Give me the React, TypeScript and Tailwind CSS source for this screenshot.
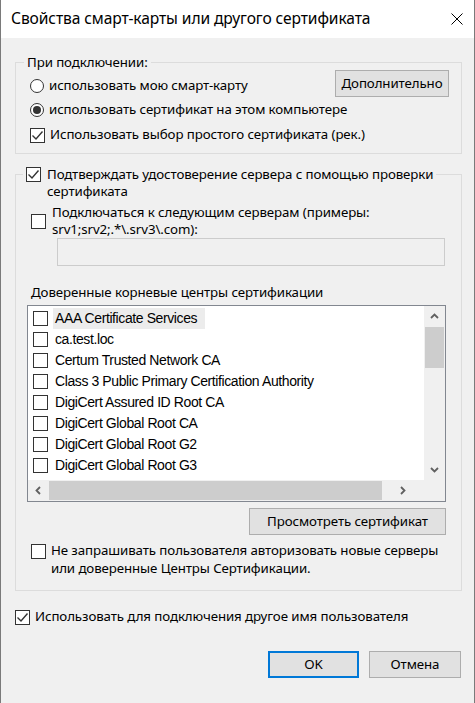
import React from 'react'

const certs = [
  'AAA Certificate Services',
  'ca.test.loc',
  'Certum Trusted Network CA',
  'Class 3 Public Primary Certification Authority',
  'DigiCert Assured ID Root CA',
  'DigiCert Global Root CA',
  'DigiCert Global Root G2',
  'DigiCert Global Root G3',
]

function CheckBox({ checked = false }: { checked?: boolean }) {
  return (
    <span className="w-[15px] h-[15px] shrink-0 border border-[#333333] bg-white flex items-center justify-center">
      {checked && (
        <svg width="13" height="13" viewBox="0 0 13 13">
          <path d="M1.5 6.5 L5 10 L11.5 2.5" fill="none" stroke="#333333" strokeWidth="1.4" />
        </svg>
      )}
    </span>
  )
}

function Radio({ checked = false }: { checked?: boolean }) {
  return (
    <span className="w-[14px] h-[14px] shrink-0 rounded-full border border-[#333333] bg-white flex items-center justify-center">
      {checked && <span className="w-[8px] h-[8px] rounded-full bg-[#333333]" />}
    </span>
  )
}

function Chevron({ dir }: { dir: 'up' | 'down' | 'left' | 'right' }) {
  const d = {
    up: 'M2 7 L5.5 3.5 L9 7',
    down: 'M2 4 L5.5 7.5 L9 4',
    left: 'M7 2 L3.5 5.5 L7 9',
    right: 'M4 2 L7.5 5.5 L4 9',
  }[dir]
  return (
    <svg width="11" height="11" viewBox="0 0 11 11">
      <path d={d} fill="none" stroke="#606060" strokeWidth="1.8" />
    </svg>
  )
}

export default function App() {
  return (
    <div
      className="w-[475px] h-[703px] bg-[#f0f0f0] border-x border-[#7a7a7a] flex flex-col text-[13.3px] tracking-[-0.1px] text-black overflow-hidden whitespace-nowrap"
      style={{ fontFamily: '"Noto Sans", "Open Sans", sans-serif' }}
    >
      {/* title bar */}
      <div className="h-[38px] bg-white flex items-center justify-between pl-[10px] pr-[11px] shrink-0">
        <span className="text-[15.6px] tracking-[-0.1px]">Свойства смарт-карты или другого сертификата</span>
        <svg width="12" height="12" viewBox="0 0 12 12">
          <path d="M0.5 0.5 L11.5 11.5 M11.5 0.5 L0.5 11.5" stroke="#000" strokeWidth="1" />
        </svg>
      </div>

      {/* group 1 */}
      <div className="ml-[14px] mt-[24px] w-[447px] h-[92px] shrink-0 border border-[#dcdcdc] pl-[14px] pr-[12px] flex flex-col">
        <div className="-mt-[11px] -ml-[6px] px-[3px] w-fit bg-[#f0f0f0] leading-[20px]">При подключении:</div>
        <div className="-mt-[2px] flex justify-between items-start">
          <label className="mt-[6px] h-[20px] flex items-center gap-[5px]">
            <Radio />
            <span>использовать мою смарт-карту</span>
          </label>
          <button className="w-[114px] h-[27px] bg-[#e1e1e1] border border-[#adadad]">Дополнительно</button>
        </div>
        <label className="mt-[3px] h-[20px] flex items-center gap-[5px]">
          <Radio checked />
          <span>использовать сертификат на этом компьютере</span>
        </label>
        <label className="mt-[5px] h-[20px] flex items-center gap-[5px]">
          <CheckBox checked />
          <span>Использовать выбор простого сертификата (рек.)</span>
        </label>
      </div>

      {/* group 2 */}
      <div className="ml-[14px] mt-[20px] w-[447px] h-[417px] shrink-0 border border-[#dcdcdc] flex flex-col">
        <div className="-mt-[9px] ml-[7px] px-[3px] w-fit bg-[#f0f0f0] flex items-start gap-[6px] leading-[17px]">
          <span className="mt-[1px]"><CheckBox checked /></span>
          <span>
            Подтверждать удостоверение сервера с помощью проверки
            <br />
            сертификата
          </span>
        </div>

        <label className="ml-[15px] mt-[4px] flex items-center gap-[6px] leading-[17px]">
          <CheckBox />
          <span>
            Подключаться к следующим серверам (примеры:
            <br />
            srv1;srv2;.*\.srv3\.com):
          </span>
        </label>

        <div className="ml-[41px] w-[388px] h-[28px] shrink-0 border border-[#cccccc] bg-[#f0f0f0]" />

        <div className="ml-[15px] mt-[18px] leading-[17px]">Доверенные корневые центры сертификации</div>

        <div className="ml-[11px] mt-[4px] w-[419px] h-[197px] shrink-0 border border-[#828790] bg-white flex flex-col">
          <div className="flex h-[174px]">
            <div
              className="flex-1 pt-[2px] text-[14px]"
              style={{ fontFamily: '"Liberation Sans", Arial, sans-serif', letterSpacing: '-0.4px' }}
            >
              {certs.map((c, i) => (
                <div key={c} className="h-[21px] flex items-center pl-[5px]">
                  <CheckBox />
                  <span className={`ml-[5px] px-[2px] h-[21px] flex items-center ${i === 0 ? 'bg-[#ececec] pr-[8px]' : ''}`}>
                    {c}
                  </span>
                </div>
              ))}
            </div>
            <div className="w-[21px] bg-[#f0f0f0] flex flex-col">
              <div className="h-[21px] flex items-center justify-center"><Chevron dir="up" /></div>
              <div className="h-[41px] mx-[1px] bg-[#cdcdcd]" />
              <div className="flex-1" />
              <div className="h-[21px] flex items-center justify-center"><Chevron dir="down" /></div>
            </div>
          </div>
          <div className="h-[21px] flex bg-[#f0f0f0]">
            <div className="w-[21px] flex items-center justify-center"><Chevron dir="left" /></div>
            <div className="w-[333px] my-[1px] bg-[#cdcdcd]" />
            <div className="w-[41px] flex items-center justify-center"><Chevron dir="right" /></div>
            <div className="flex-1" />
          </div>
        </div>

        <button className="ml-[233px] mt-[6px] w-[197px] h-[27px] shrink-0 bg-[#e1e1e1] border border-[#adadad]">
          Просмотреть сертификат
        </button>

        <label className="ml-[15px] mt-[6px] flex items-start gap-[5px] leading-[18px]">
          <span className="mt-[3px]"><CheckBox /></span>
          <span>
            Не запрашивать пользователя авторизовать новые серверы
            <br />
            или доверенные Центры Сертификации.
          </span>
        </label>
      </div>

      <label className="ml-[14px] mt-[17px] h-[18px] flex items-center gap-[5px]">
        <CheckBox checked />
        <span>Использовать для подключения другое имя пользователя</span>
      </label>

      <div className="mt-[25px] mr-[13px] flex justify-end gap-[10px]">
        <button className="w-[91px] h-[27px] bg-[#e1e1e1] border-2 border-[#0078d7]">OK</button>
        <button className="w-[92px] h-[27px] bg-[#e1e1e1] border border-[#adadad]">Отмена</button>
      </div>
    </div>
  )
}
